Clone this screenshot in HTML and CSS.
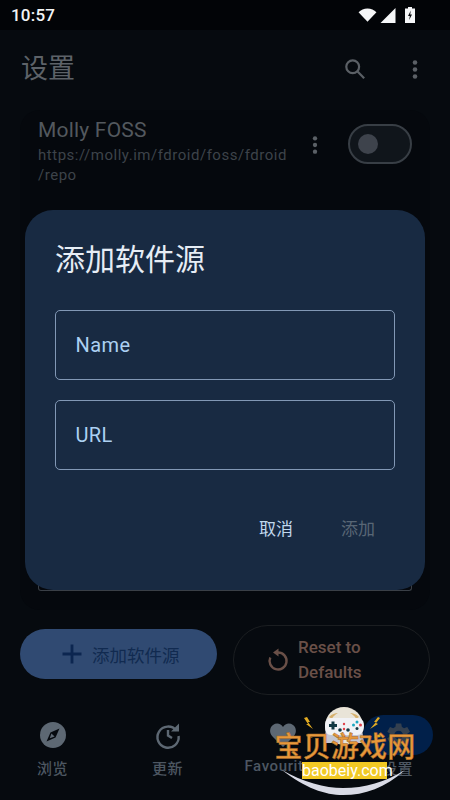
FILE: index.html
```html
<!DOCTYPE html>
<html lang="zh">
<head>
<meta charset="utf-8">
<title>设置</title>
<link rel="stylesheet" href="styles.css">
</head>
<body>
<div class="screen">
  <div class="status">
    <span class="time">10:57</span>
    <div class="status-icons">
      <svg class="s-wifi" viewBox="0 0 20 14"><path d="M10 14 0.6 4.200C3 1.700 6.300.2 10 .2s7 1.500 9.400 4z"/></svg>
      <svg class="s-signal" viewBox="0 0 16 16"><path d="M16 0V16H0z"/></svg>
      <svg class="s-batt" viewBox="0 0 10 16"><path d="M3 0h4v1.500h3V16H0V1.500h3z"/><path class="bolt" d="M5.800 3.500 3 9h1.800l-.6 4L7 7.500H5.200z"/></svg>
    </div>
  </div>
  <header class="appbar">
    <h1 class="title">设置</h1>
    <svg class="search" viewBox="0 0 24 24"><circle cx="9.500" cy="9.500" r="7"/><path d="M14.500 14.500 22 22"/></svg>
    <svg class="dots" viewBox="0 0 6 24"><circle cx="3" cy="4" r="2.600"/><circle cx="3" cy="12" r="2.600"/><circle cx="3" cy="20" r="2.600"/></svg>
  </header>
  <main class="list">
    <section class="repo">
      <div class="repo-text">
        <div class="repo-name">Molly FOSS</div>
        <div class="repo-url">https://molly.im/fdroid/foss/fdroid<br>/repo</div>
      </div>
      <svg class="dots small" viewBox="0 0 6 24"><circle cx="3" cy="4" r="2.600"/><circle cx="3" cy="12" r="2.600"/><circle cx="3" cy="20" r="2.600"/></svg>
      <div class="switch"><span class="knob"></span></div>
    </section>
    <div class="stub"></div>
  </main>
  <div class="actions">
    <button class="btn add">
      <svg viewBox="0 0 24 24"><path d="M12 2.500V21.500M2.500 12H21.500"/></svg>
      <span>添加软件源</span>
    </button>
    <button class="btn reset">
      <svg viewBox="0 0 24 24"><path class="ring" d="M12 4.500a8.500 8.500 0 1 1-7.700 5"/><path class="tip" d="M12.500 .5 7 4.500l5.500 4z"/></svg>
      <span>Reset to<br>Defaults</span>
    </button>
  </div>
  <nav class="nav">
    <div class="tab">
      <div class="tab-icon"><svg viewBox="0 0 26 26"><circle class="fill" cx="13" cy="13" r="13"/><path class="cut" d="M19.500 6.500 15.500 15.500 6.500 19.500 10.500 10.500z"/><path class="fill" d="M11.400 11.400 14.600 14.600 9.800 16.200z"/></svg></div>
      <span>浏览</span>
    </div>
    <div class="tab">
      <div class="tab-icon"><svg viewBox="0 0 26 26"><path class="line" d="M21.300 8.500A10.600 10.600 0 1 0 23.600 14"/><path class="fill" d="M24 1.500V9.500H16z"/><path class="line" d="M13 8V13.500L17 16"/></svg></div>
      <span>更新</span>
    </div>
    <div class="tab">
      <div class="tab-icon"><svg viewBox="0 0 26 24"><path class="fill" d="M13 24 2.500 13.500C-1 10-.500 4.500 3 2 6.500-.500 11 .500 13 4c2-3.500 6.500-4.500 10-2 3.500 2.500 4 8 .5 11.500z"/></svg></div>
      <span>Favourites</span>
    </div>
    <div class="tab active">
      <div class="tab-icon"><svg viewBox="0 0 24 24"><path class="fill" d="M19.400 13a7.500 7.500 0 0 0 0-2l2.200-1.700-2.200-3.700-2.600 1a8 8 0 0 0-1.700-1L14.600 2.800h-4.300l-.4 2.800a8 8 0 0 0-1.700 1l-2.600-1-2.200 3.700L5.600 11a7.500 7.500 0 0 0 0 2l-2.200 1.700 2.200 3.700 2.600-1a8 8 0 0 0 1.700 1l.4 2.800h4.300l.4-2.800a8 8 0 0 0 1.700-1l2.600 1 2.200-3.700zM12.500 15.500a3.500 3.500 0 1 1 0-7 3.500 3.500 0 0 1 0 7z"/></svg></div>
      <span>设置</span>
    </div>
  </nav>

  <div class="dialog">
    <h2 class="dialog-title">添加软件源</h2>
    <div class="field">Name</div>
    <div class="field">URL</div>
    <div class="dialog-actions">
      <span class="cancel">取消</span>
      <span class="confirm">添加</span>
    </div>
  </div>

  <div class="mark">
    <svg class="mark-art" viewBox="0 0 140 90">
      <path class="moon" d="M7 65C30 83 50 90 68 90 90 90 110 83 130 65 110 77 90 83 68 83 50 83 28 77 7 65z"/>
      <circle class="dome" cx="69" cy="21" r="19"/>
      <path class="tan" d="M54 12c3-3 6-4 9-4-3 2-5 3-6 6zM84 12c-3-3-6-4-9-4 3 2 5 3 6 6z"/>
      <path class="grip" d="M51 24H87L89 38H74C72 31 66 31 64 38H49z"/>
      <path class="pad" d="M56 13h26c5 0 7 3 7 8 0 6-3 9-7 9H56c-4 0-6-3-6-9 0-5 2-8 6-8z"/>
      <path class="dark" d="M54 19h2.500v-2.500h3V19H62v3h-2.500v2.500h-3V22H54z"/>
      <circle class="red" cx="69" cy="19" r="1.200"/><circle class="red" cx="69" cy="24" r="1.200"/>
      <circle class="dark" cx="65" cy="25" r="1.800"/><circle class="dark" cx="73" cy="25" r="1.800"/>
      <circle class="teal" cx="82" cy="17" r="1.500"/><circle class="red" cx="85.500" cy="20" r="1.500"/><circle class="teal" cx="78.500" cy="20" r="1.500"/><circle class="dark" cx="82" cy="23.500" r="1.500"/>
      <path class="bolt-y" d="M32 12l3 5-2 0 5 7-7-5 2 0-4-6zM103 12l-4 5 2 0-6 7 8-5-2-1 4-5zM31 29l5 1-1 1 3 2-7-2 1-1zM107 29l-6 1 1 1-3 2 7-1-1-1z"/>
    </svg>
    <div class="mark-cn">宝贝游戏网</div>
    <div class="mark-url">baobeiy.com</div>
  </div>
</div>
</body>
</html>
```
FILE: styles.css
```css
* { box-sizing: border-box; }
html, body { margin: 0; padding: 0; }
body { width: 450px; height: 800px; background: #060a0f; font-family: Roboto, "Noto Sans CJK SC", sans-serif; }
.screen { position: relative; width: 450px; height: 800px; overflow: hidden; display: flex; flex-direction: column; background: #060a0f; }

.status { height: 30px; flex: none; background: #020407; display: flex; align-items: center; justify-content: space-between; padding: 0 35px 0 11px; }
.time { color: #f2f4f6; font-size: 17px; font-weight: 500; letter-spacing: .2px; }
.status-icons { display: flex; align-items: center; gap: 3px; }
.status-icons svg { fill: #f5f6f7; display: block; }
.s-wifi { width: 19px; height: 14px; }
.s-signal { width: 16px; height: 15px; }
.s-batt { width: 10px; height: 16px; margin-left: 6px; }
.s-batt .bolt { fill: #0a0c10; }

.appbar { height: 80px; flex: none; display: flex; align-items: center; padding: 0 32px 2px 21px; }
.title { margin: 0; flex: 1; font-size: 27px; font-weight: 400; color: #5d6268; line-height: 1; }
.search { width: 22px; height: 22px; margin-right: 46px; fill: none; stroke: #5b6066; stroke-width: 2.400; }
.dots { width: 6px; height: 21px; fill: #5b6066; display: block; }
.dots.small { height: 20px; margin: 17px 30px 0 0; }

.list { height: 500px; flex: none; margin: 0 20px; display: flex; flex-direction: column; justify-content: space-between; background: #05080d; border-radius: 20px; padding-bottom: 19px; }
.repo { display: flex; align-items: flex-start; padding: 8px 18px 0 18px; }
.repo-text { flex: 1; }
.repo-name { font-size: 21px; color: #53585e; line-height: 25px; letter-spacing: .2px; }
.repo-url { font-size: 15px; color: #3d434a; line-height: 20px; margin-top: 2px; letter-spacing: .52px; }
.switch { width: 64px; height: 40px; margin-top: 6px; border: 2px solid #383e45; border-radius: 20px; background: #10151b; display: flex; align-items: center; padding-left: 8px; }
.knob { width: 20px; height: 20px; border-radius: 50%; background: #3e434c; }
.stub { height: 12px; margin: 0 18px; border: 1px solid #3a3f46; border-top: 0; border-radius: 0 0 3px 3px; }

.actions { height: 90px; flex: none; display: flex; align-items: flex-start; justify-content: space-between; padding: 15px 20px 0; }
.btn { width: 197px; font: inherit; display: flex; align-items: center; background: none; border: 0; padding: 0; }
.add { height: 50px; margin-top: 4px; background: #304a72; border-radius: 25px; color: #112a50; font-size: 17.500px; gap: 8px; padding-left: 40px; }
.add svg { width: 24px; height: 24px; fill: none; stroke: #0c2650; stroke-width: 2.800; flex: none; }
.reset { height: 70px; border: 1px solid #1b1e21; border-radius: 35px; color: #6a5048; font-size: 17px; font-weight: 500; line-height: 25px; gap: 8px; padding-left: 32px; text-align: left; }
.reset svg { width: 24px; height: 24px; flex: none; overflow: visible; }
.reset .ring { fill: none; stroke: #6a5048; stroke-width: 2.400; }
.reset .tip { fill: #6a5048; }

.nav { flex: 1; display: grid; grid-template-columns: repeat(4, 115px); justify-content: center; padding-top: 15px; }
.tab { display: flex; flex-direction: column; align-items: center; white-space: nowrap; color: #4d5762; font-size: 15px; font-weight: 500; letter-spacing: .6px; }
.tab-icon { width: 70px; height: 40px; border-radius: 20px; display: flex; align-items: center; justify-content: center; margin-bottom: 2px; }
.tab-icon svg { width: 26px; height: 26px; overflow: visible; }
.tab-icon .fill { fill: #5d6873; }
.tab-icon .cut { fill: #060a0f; }
.tab-icon .line { fill: none; stroke: #5d6873; stroke-width: 2.400; }
.tab.active .tab-icon { background: #01204a; }
.tab.active .tab-icon svg { width: 30px; height: 30px; }
.tab.active .fill { fill: #34404f; }

.dialog { position: absolute; left: 25px; top: 210px; width: 400px; height: 380px; padding: 30px; border-radius: 28px; background: #182a42; display: flex; flex-direction: column; }
.dialog-title { margin: 0 0 30px; font-size: 30px; font-weight: 400; line-height: 40px; color: #e6edf5; }
.field { height: 70px; margin-bottom: 20px; padding-left: 19.500px; display: flex; align-items: center; border: 1.500px solid #8298b5; border-radius: 5px; color: #acd0f2; font-size: 20px; letter-spacing: .4px; }
.dialog-actions { display: flex; justify-content: flex-end; gap: 48px; font-size: 17px; font-weight: 400; padding: 25px 20px 0 0; }
.cancel { color: #c0d8ee; }
.confirm { color: #586675; }

.mark { position: absolute; left: 275px; top: 705px; width: 140px; height: 90px; }
.mark-art { position: absolute; inset: 0; width: 140px; height: 90px; overflow: visible; }
.moon { fill: #d9dbe6; }
.dome { fill: #e9e4d8; }
.tan { fill: #d6b06c; }
.grip { fill: #c4c6d2; }
.pad { fill: #f1f2f6; }
.dark { fill: #123843; }
.red { fill: #e0404a; }
.teal { fill: #1ba6c0; }
.bolt-y { fill: #e2ab22; }
.mark-cn { position: absolute; left: -2px; top: 28px; width: 144px; text-align: center; font-size: 28px; line-height: 30px; font-weight: 500; letter-spacing: .2px; color: #e8993a; -webkit-text-stroke: .5px #a8692a; white-space: nowrap; }
.mark-url { position: absolute; left: 27px; top: 57px; width: 85px; height: 17px; background: #f2c924; color: #fff; text-align: center; font-size: 16px; line-height: 17px; white-space: nowrap; }
```
